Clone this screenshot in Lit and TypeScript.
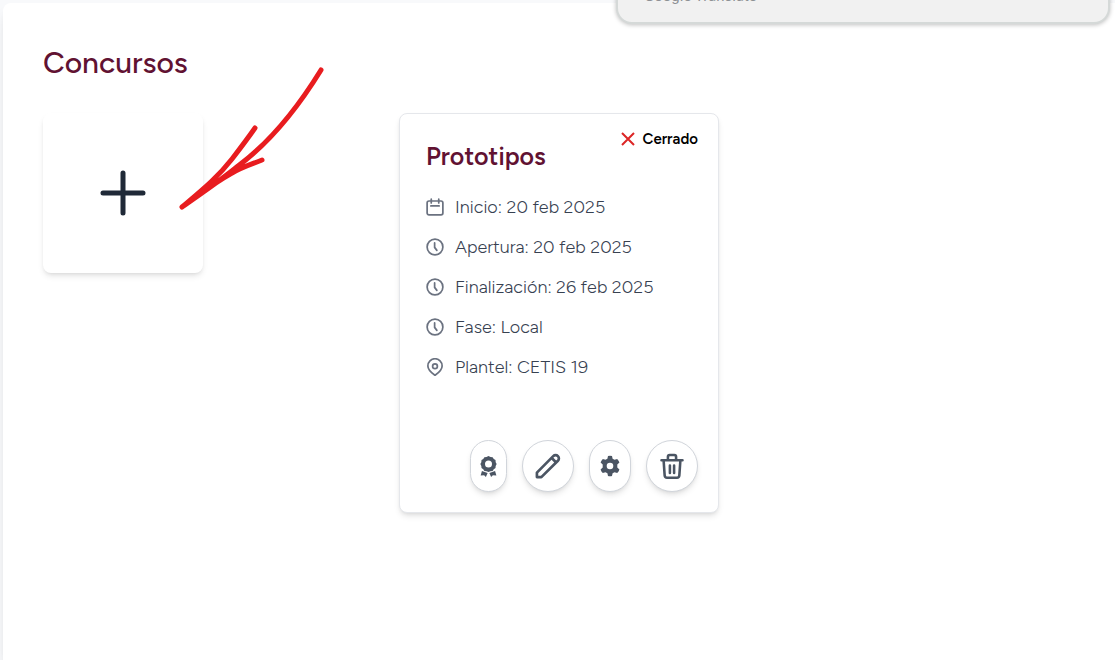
import { LitElement, html, css, svg } from "lit";
import { customElement, property } from "lit/decorators.js";

type IconName = "calendar" | "clock" | "pin" | "award" | "pencil" | "gear" | "trash";

const calendar = svg`<g stroke-width="2.300"><rect x="1.500" y="4" width="21" height="18.500" rx="2.500"/><path d="M7 1.500v5M17 1.500v5M6.500 10.500h11"/></g>`;
const clock = svg`<g stroke-width="2.300"><circle cx="12" cy="12" r="10.500"/><path d="M11.500 6.500v6l3 4"/></g>`;
const pin = svg`<g stroke-width="2.300"><path d="M12 23c-2-1.500-9.500-6.500-9.500-12.500a9.500 9.500 0 0 1 19 0C21.500 16.500 14 21.500 12 23Z"/><circle cx="12" cy="11" r="3.200"/></g>`;
const pencil = svg`<path stroke-width="2.300" d="m15.200 5.200 3.600 3.600m-2.300-5.300a2.600 2.600 0 1 1 4 4L6.300 21.500H2.500v-3.800L16.500 3.500Z"/>`;
const trash = svg`<path stroke-width="2.200" d="M3 7h18M4.800 7l.9 13q.2 2 2 2h8.600q1.800 0 2-2l.9-13M8.500 7V4q0-1.500 1.500-1.500h4q1.500 0 1.500 1.500v3M10.200 11.500v6.500M13.800 11.500v6.500"/>`;

const award = svg`<g fill="currentColor" stroke="none"><path fill-rule="evenodd" d="m12 0 2.300 1 2.400.3 1.300 2 2 1.400.2 2.400 1.100 2.100-1.100 2.200-.2 2.400-2 1.300-1.300 2-2.400.2L12 18.400l-2.300-1.100-2.400-.2-1.300-2-2-1.300-.2-2.400-1.100-2.200 1.100-2.100L4 4.700l2-1.400 1.300-2L9.700 1Zm0 5.200a4 4 0 1 0 0 8 4 4 0 0 0 0-8Z"/><path d="m4.500 17 6.500 2.500L9 24l-2-2-4 .2ZM19.500 17l-6.500 2.500 2 4.500 2-2 4 .2Z"/></g>`;
const gear = svg`<path fill="currentColor" stroke="none" fill-rule="evenodd" d="M10 2q2-.6 4 0l.6 2.700q1 .4 1.900 1.100l2.700-.8q1.600 1.500 2.200 3.500l-2.100 1.900v3.200l2.100 1.900q-.6 2-2.200 3.500l-2.700-.8q-.9.700-1.900 1.100L14 22q-2 .6-4 0l-.6-2.700q-1-.4-1.900-1.100l-2.700.8q-1.600-1.500-2.200-3.500l2.100-1.900v-3.200L2.600 8.500q.6-2 2.200-3.500l2.700.8q.9-.7 1.900-1.100ZM12 8.700a3.300 3.300 0 1 0 0 6.600 3.300 3.300 0 0 0 0-6.600Z"/>`;

const icons = { calendar, clock, pin, award, pencil, gear, trash };

@customElement("ui-icon")
class UiIcon extends LitElement {
  @property() name: IconName = "clock";

  static styles = css`
    :host { display: block; width: 20px; height: 20px; flex: none; }
    .glyph {
      display: block;
      width: 100%;
      height: 100%;
      fill: none;
      stroke: currentColor;
      stroke-linecap: round;
      stroke-linejoin: round;
    }
  `;

  render() {
    return html`<svg class="glyph" viewBox="0 0 24 24" aria-hidden="true">${icons[this.name]}</svg>`;
  }
}

@customElement("contest-card")
class ContestCard extends LitElement {
  @property() heading = "";
  @property() status = "";
  @property({ attribute: false }) details: { icon: IconName; text: string }[] = [];

  static styles = css`
    :host { display: block; }
    .card {
      box-sizing: border-box;
      display: flex;
      flex-direction: column;
      min-height: 400px;
      padding: 15px 20px 20px 26px;
      background: #fff;
      border: 1px solid #e5e7eb;
      border-radius: 8px;
      box-shadow: 0 4px 6px -1px rgb(0 0 0 / 0.1), 0 2px 4px -2px rgb(0 0 0 / 0.1);
    }
    .top { display: flex; justify-content: space-between; align-items: flex-start; }
    .heading {
      margin: 0;
      padding-top: 11px;
      font-size: 25px;
      line-height: 32px;
      font-weight: 600;
      color: #611232;
    }
    .status {
      display: flex;
      align-items: center;
      gap: 8px;
      font-size: 15px;
      line-height: 20px;
      font-weight: 600;
      color: #000;
    }
    .cross { width: 14px; height: 14px; fill: none; stroke: #dc2626; stroke-width: 2; }
    .details {
      list-style: none;
      margin: 21px 0 0;
      padding: 0;
      display: flex;
      flex-direction: column;
      gap: 12px;
    }
    .detail {
      display: flex;
      align-items: center;
      gap: 11px;
      font-size: 18px;
      line-height: 28px;
      font-weight: 300;
      color: #374151;
    }
    .detail ui-icon { width: 18px; height: 18px; color: #6b7280; }
    .actions { display: flex; justify-content: flex-end; gap: 15px; margin-top: auto; }
    .action {
      box-sizing: border-box;
      display: flex;
      align-items: center;
      justify-content: center;
      height: 52px;
      padding: 0 11px;
      color: #4b5563;
      background: #fff;
      border: 1px solid #d1d5db;
      border-radius: 26px;
      box-shadow: 0 4px 6px -1px rgb(0 0 0 / 0.1), 0 2px 4px -2px rgb(0 0 0 / 0.1);
      cursor: pointer;
    }
    .action ui-icon { width: 28px; height: 28px; }
    .narrow { padding: 0 7px; }
    .narrow ui-icon { width: 21px; height: 21px; }
    .medium { padding: 0 8px; }
    .medium ui-icon { width: 24px; height: 24px; }
  `;

  render() {
    return html`
      <article class="card">
        <header class="top">
          <h2 class="heading">${this.heading}</h2>
          <span class="status">
            <svg class="cross" viewBox="0 0 14 14" aria-hidden="true"><path d="m1 1 12 12M13 1 1 13" /></svg>
            ${this.status}
          </span>
        </header>
        <ul class="details">
          ${this.details.map(
            (d) => html`<li class="detail"><ui-icon name=${d.icon}></ui-icon><span>${d.text}</span></li>`
          )}
        </ul>
        <footer class="actions">
          <button class="action narrow" type="button" aria-label="Ganadores"><ui-icon name="award"></ui-icon></button>
          <button class="action" type="button" aria-label="Editar"><ui-icon name="pencil"></ui-icon></button>
          <button class="action medium" type="button" aria-label="Configurar"><ui-icon name="gear"></ui-icon></button>
          <button class="action" type="button" aria-label="Eliminar"><ui-icon name="trash"></ui-icon></button>
        </footer>
      </article>
    `;
  }
}

@customElement("app-root")
class AppRoot extends LitElement {
  static styles = css`
    :host {
      display: block;
      position: relative;
      overflow: hidden;
      box-sizing: border-box;
      min-height: 100vh;
      padding: 3px 0 0 3px;
      background: #f8f9fb;
      font-family: Figtree, Lato, "Open Sans", sans-serif;
    }
    .panel {
      box-sizing: border-box;
      min-height: calc(100vh - 3px);
      padding: 40px;
      background: #fff;
      border-radius: 8px 0 0 0;
      box-shadow: 0 10px 15px -3px rgb(0 0 0 / 0.1), 0 4px 6px -4px rgb(0 0 0 / 0.1);
    }
    .title {
      margin: 0 0 30px;
      font-size: 30px;
      line-height: 40px;
      font-weight: 500;
      color: #611232;
    }
    .grid {
      display: grid;
      grid-template-columns: repeat(3, minmax(0, 1fr));
      gap: 36px;
      align-items: start;
    }
    .add {
      display: flex;
      align-items: center;
      justify-content: center;
      width: 160px;
      height: 160px;
      padding: 0;
      color: #1f2937;
      background: #fff;
      border: 0;
      border-radius: 8px;
      box-shadow: 0 4px 6px -1px rgb(0 0 0 / 0.1), 0 2px 4px -2px rgb(0 0 0 / 0.1);
      cursor: pointer;
    }
    .plus { width: 46px; height: 46px; fill: none; stroke: currentColor; stroke-width: 5; stroke-linecap: round; }
    .arrow {
      position: absolute;
      left: 176px;
      top: 64px;
      width: 152px;
      height: 150px;
      fill: none;
      stroke: #e81c1f;
      stroke-width: 5;
      stroke-linecap: round;
      stroke-linejoin: round;
      pointer-events: none;
    }
    .translate {
      position: absolute;
      box-sizing: border-box;
      right: 5px;
      bottom: calc(100% - 24px);
      width: 494px;
      padding: 0 26px 16px;
      background: #f1f1f1;
      border: 2px solid #d5d9d8;
      border-radius: 16px;
      box-shadow: 0 1px 4px rgb(0 0 0 / 0.25);
      font-family: Roboto, sans-serif;
      font-size: 15px;
      line-height: 20px;
      color: #8e9195;
    }
  `;

  private details = [
    { icon: "calendar", text: "Inicio: 20 feb 2025" },
    { icon: "clock", text: "Apertura: 20 feb 2025" },
    { icon: "clock", text: "Finalización: 26 feb 2025" },
    { icon: "clock", text: "Fase: Local" },
    { icon: "pin", text: "Plantel: CETIS 19" },
  ];

  render() {
    return html`
      <main class="panel">
        <h1 class="title">Concursos</h1>
        <div class="grid">
          <button class="add" type="button" aria-label="Agregar concurso">
            <svg class="plus" viewBox="0 0 46 46" aria-hidden="true"><path d="M23 3v40M3 23h40" /></svg>
          </button>
          <contest-card heading="Prototipos" status="Cerrado" .details=${this.details}></contest-card>
        </div>
      </main>
      <svg class="arrow" viewBox="0 0 152 150" aria-hidden="true">
        <path d="M145 6C121 45 93 79 62 102 44 117 24 130 6 143M6 143C26 126 42 113 56 95 66 82 72 74 79 64M6 143C28 127 38 119 56 109 66 103 76 100 86 96" />
      </svg>
      <aside class="translate">Google Translate</aside>
    `;
  }
}
